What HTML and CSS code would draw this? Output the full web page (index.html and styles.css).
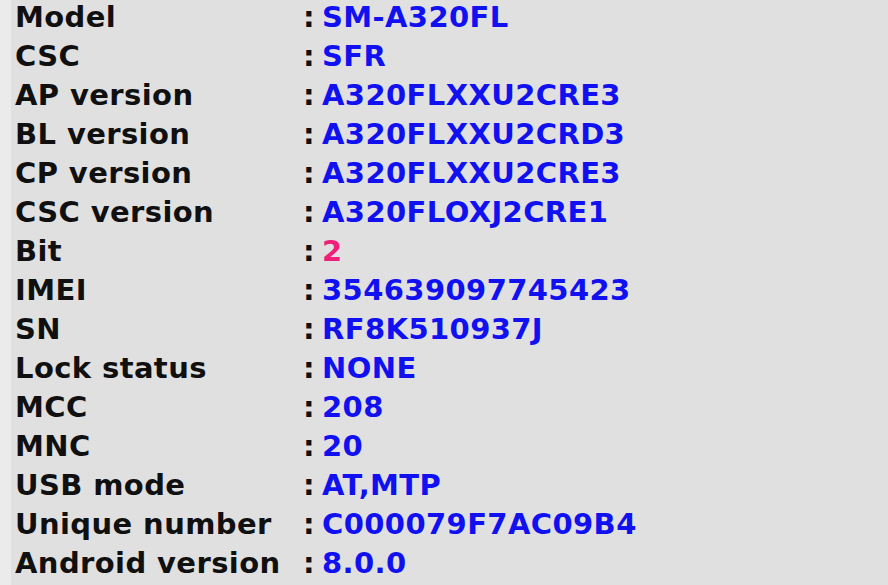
FILE: index.html
```html
<!DOCTYPE html>
<html>
<head>
<meta charset="utf-8">
<link rel="stylesheet" href="styles.css">
</head>
<body>
<div class="strip"></div>
<div class="panel">
  <div class="list">
    <div class="label">Model</div><div class="sep">:</div><div class="value">SM-A320FL</div>
    <div class="label">CSC</div><div class="sep">:</div><div class="value">SFR</div>
    <div class="label">AP version</div><div class="sep">:</div><div class="value">A320FLXXU2CRE3</div>
    <div class="label">BL version</div><div class="sep">:</div><div class="value">A320FLXXU2CRD3</div>
    <div class="label">CP version</div><div class="sep">:</div><div class="value">A320FLXXU2CRE3</div>
    <div class="label">CSC version</div><div class="sep">:</div><div class="value">A320FLOXJ2CRE1</div>
    <div class="label">Bit</div><div class="sep">:</div><div class="value pink">2</div>
    <div class="label">IMEI</div><div class="sep">:</div><div class="value">354639097745423</div>
    <div class="label">SN</div><div class="sep">:</div><div class="value">RF8K510937J</div>
    <div class="label">Lock status</div><div class="sep">:</div><div class="value">NONE</div>
    <div class="label">MCC</div><div class="sep">:</div><div class="value">208</div>
    <div class="label">MNC</div><div class="sep">:</div><div class="value">20</div>
    <div class="label">USB mode</div><div class="sep">:</div><div class="value">AT,MTP</div>
    <div class="label">Unique number</div><div class="sep">:</div><div class="value">C000079F7AC09B4</div>
    <div class="label">Android version</div><div class="sep">:</div><div class="value">8.0.0</div>
  </div>
</div>
</body>
</html>
```
FILE: styles.css
```css
html, body {
  margin: 0;
  padding: 0;
  height: 100%;
  background: #e0e0e0;
}
body {
  display: flex;
  font-family: "DejaVu Sans", Verdana, sans-serif;
  font-weight: bold;
  font-size: 29px;
  overflow: hidden;
}
.strip {
  width: 11px;
  flex: none;
  background: #ebebeb;
}
.panel {
  flex: 1;
  padding-left: 4px;
  margin-top: -3px;
}
.list {
  display: grid;
  grid-template-columns: 288px 19px auto;
  grid-auto-rows: 39px;
  align-items: center;
  line-height: 30px;
}
.label {
  color: #101010;
  letter-spacing: 0.4px;
}
.sep {
  color: #101010;
}
.value {
  color: #1010f0;
  letter-spacing: 0.4px;
}
.pink {
  color: #f0207a;
}
```
